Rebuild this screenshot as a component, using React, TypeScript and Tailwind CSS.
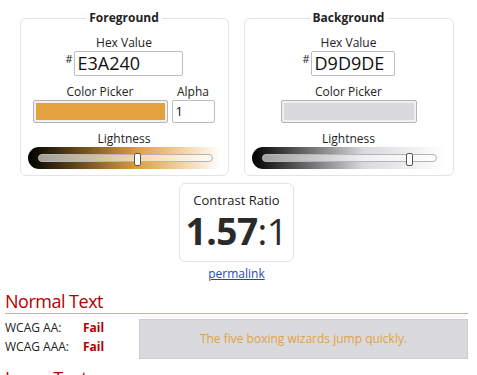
import React from "react";

// Contrast checker: two color fieldsets, ratio box, results for normal text.

interface SliderProps {
  color: string;
  pos: number;
}

function Lightness({ color, pos }: SliderProps) {
  return (
    <div
      className="relative ml-[7px] h-[22px] w-[193px] rounded-l-full"
      style={{ backgroundImage: `linear-gradient(to right, #000 0%, ${color} 58%, #fff 100%)` }}
    >
      <div className="absolute left-[10px] right-[8px] top-[7px] h-[8px] rounded-full border border-[#b5b5b5] bg-white/60" />
      <div
        className="absolute top-[6px] h-[13px] w-[7px] rounded-[2px] border border-[#555] bg-white"
        style={{ left: pos }}
      />
    </div>
  );
}

function HexInput({ value, width }: { value: string; width: string }) {
  return (
    <div className="flex items-start justify-center">
      <span className="mr-[1px] mt-[2px] text-[11px] leading-[12px]">#</span>
      <div
        className={`${width} h-[25px] rounded-[2px] border border-[#bdbdbd] pl-[3px] text-[18px] leading-[23px] text-[#111]`}
      >
        {value}
      </div>
    </div>
  );
}

function Swatch({ color, width }: { color: string; width: string }) {
  return (
    <div className={`${width} h-[23px] rounded-[2px] border border-[#b5b5b5] bg-[#f0f0f0] p-[2px]`}>
      <div className="h-full w-full" style={{ backgroundColor: color }} />
    </div>
  );
}

export default function App() {
  return (
    <div className="ml-[5px] w-[463px] font-['Open_Sans',sans-serif] text-[12px] text-[#222]">
      <div className="flex justify-center gap-[15px] pt-[9px]">
        {/* Foreground */}
        <fieldset className="w-[209px] rounded-[6px] border border-[#e3e3e3] pb-[6px]">
          <legend className="mx-auto px-[3px] text-[12px] font-bold leading-[18px]">Foreground</legend>
          <div className="mt-[8px] text-center leading-[16px]">Hex Value</div>
          <HexInput value="E3A240" width="w-[109px]" />
          <div className="ml-[12px] mt-[8px] flex gap-[4px]">
            <div className="flex flex-col items-center">
              <div className="leading-[16px]">Color Picker</div>
              <Swatch color="#e3a240" width="w-[135px]" />
            </div>
            <div className="flex flex-col items-center">
              <div className="leading-[16px]">Alpha</div>
              <div className="h-[23px] w-[43px] rounded-[2px] border border-[#bdbdbd] pl-[3px] text-[13px] leading-[21px] text-[#111]">
                1
              </div>
            </div>
          </div>
          <div className="mt-[8px] text-center leading-[16px]">Lightness</div>
          <Lightness color="#e3a240" pos={106} />
        </fieldset>

        {/* Background */}
        <fieldset className="w-[210px] rounded-[6px] border border-[#e3e3e3] pb-[6px]">
          <legend className="mx-auto px-[3px] text-[12px] font-bold leading-[18px]">Background</legend>
          <div className="mt-[8px] text-center leading-[16px]">Hex Value</div>
          <HexInput value="D9D9DE" width="w-[84px]" />
          <div className="mt-[8px] flex flex-col items-center">
            <div className="leading-[16px]">Color Picker</div>
            <Swatch color="#d9d9de" width="w-[136px]" />
          </div>
          <div className="mt-[8px] text-center leading-[16px]">Lightness</div>
          <Lightness color="#d9d9de" pos={154} />
        </fieldset>
      </div>

      {/* Contrast ratio */}
      <div className="mx-auto mt-[7px] w-[115px] rounded-[6px] border border-[#e3e3e3] pb-[10px] pt-[7px] text-center">
        <div className="text-[13px] leading-[18px]">Contrast Ratio</div>
        <div className="mt-[2px] text-[37px] leading-[40px] tracking-[-0.5px] text-[#2a2a2a]">
          <span className="font-bold">1.57</span>:1
        </div>
      </div>
      <div className="mt-[3px] text-center leading-[18px]">
        <a href="#" className="text-[#1f4ab0] underline">
          permalink
        </a>
      </div>

      {/* Normal text */}
      <h2 className="mt-[6px] border-b border-[#e6a3a3] text-[18px] leading-[24px] tracking-[-0.5px] text-[#b30000]">
        Normal Text
      </h2>
      <div className="mt-[4px] flex">
        <div className="w-[134px]">
          <div className="flex leading-[19px]">
            <span className="w-[78px]">WCAG AA:</span>
            <span className="font-bold text-[#b30000]">Fail</span>
          </div>
          <div className="flex leading-[19px]">
            <span className="w-[78px]">WCAG AAA:</span>
            <span className="font-bold text-[#b30000]">Fail</span>
          </div>
        </div>
        <div className="mt-[1px] flex h-[40px] flex-1 items-center justify-center border border-[#cdcdd1] bg-[#d9d9de] text-[#e3a240]">
          The five boxing wizards jump quickly.
        </div>
      </div>

      <h2 className="mt-[7px] border-b border-[#e6a3a3] text-[18px] leading-[24px] tracking-[-0.5px] text-[#b30000]">
        Large Text
      </h2>
    </div>
  );
}
